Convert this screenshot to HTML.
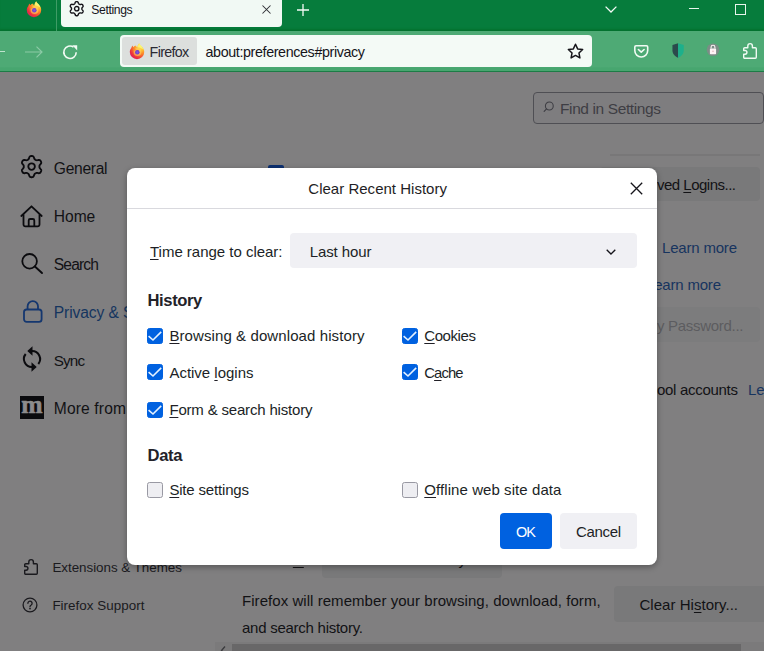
<!DOCTYPE html>
<html lang="en">
<head>
<meta charset="utf-8">
<title>Settings</title>
<style>
html,body{margin:0;padding:0;}
body{width:764px;height:651px;overflow:hidden;position:relative;background:#807f80;font-family:"Liberation Sans",sans-serif;color:#0b0b0e;}
.abs{position:absolute;white-space:nowrap;}
.tx{line-height:20px;}
svg{position:absolute;overflow:visible;}
#titlebar{left:0;top:0;width:764px;height:31px;background:#067c3c;box-shadow:inset 0 -3px 2px -1px #04722f;}
#toolbar{left:0;top:31px;width:764px;height:39.5px;background:linear-gradient(#4eaa75 0,#4eaa75 35.5px,#47a66f 37px,#47a66f 100%);border-bottom:1.5px solid #1c7c46;}
#tab{left:61px;top:0;width:221px;height:26.5px;background:#f1f9f4;border-radius:0 0 4px 4px;}
#tabsep{left:56px;top:0;width:1px;height:31px;background:#3f9c66;}
#urlbar{left:119.5px;top:35px;width:472.5px;height:32px;background:#f4faf6;border-radius:4px;}
#idbox{left:121.5px;top:37px;width:75px;height:28px;background:#dcdfdd;border-radius:3px;}
.dbtn{background:#79797a;border-radius:4px;}
#dialog{left:127px;top:168px;width:530px;height:397px;background:#fff;border-radius:8px;box-shadow:0 2px 6px rgba(0,0,0,.33);}
.cb{width:14px;height:14px;border-radius:2.5px;}
.cb.on{background:#0061e0;border:1px solid #0061e0;}
.cb.off{background:#eeeef2;border:1px solid #9999a3;}
u{text-decoration-thickness:1px;text-underline-offset:2px;}
</style>
</head>
<body>
<!-- browser chrome -->
<div id="titlebar" class="abs"></div>
<div id="tabsep" class="abs"></div>
<div id="tab" class="abs"></div>
<div id="toolbar" class="abs"></div>
<div id="urlbar" class="abs"></div>
<div id="idbox" class="abs"></div>

<svg width="0" height="0" style="left:0;top:0;">
 <defs>
  <radialGradient id="ffg" cx="0.780" cy="0.160" r="0.980">
   <stop offset="0" stop-color="#fff26a"/>
   <stop offset="0.280" stop-color="#ffc330"/>
   <stop offset="0.560" stop-color="#fb7a2a"/>
   <stop offset="0.840" stop-color="#ea2c40"/>
   <stop offset="1" stop-color="#de2068"/>
  </radialGradient>
  <radialGradient id="ffp" cx="0.5" cy="0.5" r="0.5">
   <stop offset="0" stop-color="#8658e0"/>
   <stop offset="1" stop-color="#6a3cc4"/>
  </radialGradient>
  <g id="fflogo">
   <path d="M2.200 5.200C2.400 4.000 3.000 3.000 3.600 2.400C3.700 3.200 4.000 3.800 4.400 4.200C5.200 3.200 6.400 2.700 7.300 2.900C7.300 3.700 7.700 4.300 8.300 4.600C8.400 2.700 9.300 1.000 10.300 .200C10.600 1.600 11.800 2.500 12.900 3.600C14.300 5.000 15.200 6.900 15.200 9.000A7.200 7.200 0 0 1 .800 9.000C.800 7.600 1.300 6.300 2.200 5.200Z" fill="url(#ffg)"/>
   <path d="M8.600 4.400C8.700 2.800 9.400 1.300 10.300 .500C10.700 1.900 12.000 2.800 12.900 3.900C13.600 4.700 14.100 5.600 14.400 6.600C12.800 4.800 10.600 4.300 8.600 4.400Z" fill="#f6f97a" opacity="0.800"/>
   <circle cx="8.500" cy="9.000" r="3.900" fill="#ffd76a" opacity="0.550"/>
   <circle cx="8.300" cy="9.300" r="2.250" fill="url(#ffp)"/>
   <path d="M3.800 6.600c1.300-1.000 2.900-.8 3.900.0c-1.200.0-2.000.7-2.300 1.500z" fill="#ff8a2a"/>
  </g>
  <g id="gear"><path d="M12.0 1.0L12.5 1.0L13.0 1.1L13.4 1.3L13.8 1.6L14.2 2.1L14.5 2.8L14.7 3.5L14.9 4.0L15.2 4.4L15.4 4.6L15.7 4.8L16.0 5.0L16.4 5.2L16.7 5.3L17.0 5.4L17.5 5.5L18.0 5.4L18.8 5.2L19.5 5.1L20.1 5.2L20.6 5.4L21.0 5.7L21.3 6.1L21.5 6.5L21.7 6.9L21.9 7.4L22.0 7.9L22.0 8.4L21.7 8.9L21.2 9.5L20.7 10.1L20.4 10.5L20.2 10.9L20.1 11.3L20.1 11.6L20.1 12.0L20.1 12.4L20.1 12.7L20.2 13.1L20.4 13.5L20.7 13.9L21.2 14.5L21.7 15.1L22.0 15.6L22.0 16.1L21.9 16.6L21.7 17.1L21.5 17.5L21.3 17.9L21.0 18.3L20.6 18.6L20.1 18.8L19.5 18.9L18.8 18.8L18.0 18.6L17.5 18.5L17.0 18.6L16.7 18.7L16.4 18.8L16.1 19.0L15.7 19.2L15.4 19.4L15.2 19.6L14.9 20.0L14.7 20.5L14.5 21.2L14.2 21.9L13.8 22.4L13.4 22.7L13.0 22.9L12.5 23.0L12.0 23.0L11.5 23.0L11.0 22.9L10.6 22.7L10.2 22.4L9.8 21.9L9.5 21.2L9.3 20.5L9.1 20.0L8.8 19.6L8.6 19.4L8.3 19.2L7.9 19.0L7.6 18.8L7.3 18.7L7.0 18.6L6.5 18.5L6.0 18.6L5.2 18.8L4.5 18.9L3.9 18.8L3.4 18.6L3.0 18.3L2.7 17.9L2.5 17.5L2.3 17.1L2.1 16.6L2.0 16.1L2.0 15.6L2.3 15.1L2.8 14.5L3.3 13.9L3.6 13.5L3.8 13.1L3.9 12.7L3.9 12.4L3.9 12.0L3.9 11.6L3.9 11.3L3.8 10.9L3.6 10.5L3.3 10.1L2.8 9.5L2.3 8.9L2.0 8.4L2.0 7.9L2.1 7.4L2.3 6.9L2.5 6.5L2.7 6.1L3.0 5.7L3.4 5.4L3.9 5.2L4.5 5.1L5.2 5.2L6.0 5.4L6.5 5.5L7.0 5.4L7.3 5.3L7.6 5.2L8.0 5.0L8.3 4.8L8.6 4.6L8.8 4.4L9.1 4.0L9.3 3.5L9.5 2.8L9.8 2.1L10.2 1.6L10.6 1.3L11.0 1.1L11.5 1.0Z" fill="none" stroke-linejoin="round"/><circle cx="12" cy="12" r="3.4" fill="none"/></g>
  <g id="puzzle">
   <path d="M1.700 4.700H4.800V2.900a2.300 2.300 0 0 1 4.600 0V4.700H12.300a1 1 0 0 1 1 1V14.300a1 1 0 0 1-1 1H1.700a1 1 0 0 1-1-1V11.200H2.100a1.850 1.850 0 0 0 0-3.700H.700V5.700a1 1 0 0 1 1-1z" fill="none" stroke-width="1.400" stroke-linejoin="round"/>
  </g>
 </defs>
</svg>

<!-- title bar firefox logo -->
<svg style="left:26px;top:0.500px;" width="16" height="16" viewBox="0 0 16 16"><use href="#fflogo"/></svg>
<!-- tab gear -->
<svg style="left:69.3px;top:1.3px;" width="15.4" height="15.4" viewBox="0 0 24 24"><use href="#gear" stroke="#15141a" stroke-width="2.2"/></svg>
<!-- tab close -->
<svg style="left:261.500px;top:4.700px;" width="9" height="9" viewBox="0 0 9 9"><path d="M0.500 0.500L8.500 8.500M8.500 0.500L0.500 8.500" stroke="#2a2a30" stroke-width="1.050" fill="none"/></svg>
<!-- new tab plus -->
<svg style="left:297px;top:3.500px;" width="12" height="12" viewBox="0 0 12 12"><path d="M6 0V12M0 6H12" stroke="#f4fbf6" stroke-width="1.300" fill="none"/></svg>
<!-- list all tabs chevron -->
<svg style="left:605px;top:5.500px;" width="12" height="7" viewBox="0 0 12 7"><path d="M0.600 0.600L6 6L11.400 0.600" stroke="#f4fbf6" stroke-width="1.300" fill="none"/></svg>
<!-- minimize -->
<div class="abs" style="left:689px;top:8.300px;width:10px;height:1px;background:#e8f5ec;"></div>
<!-- maximize -->
<div class="abs" style="left:735px;top:4px;width:8.500px;height:8.500px;border:1px solid #e8f5ec;"></div>

<!-- nav buttons -->
<div class="abs" style="left:0;top:50.700px;width:5px;height:1.300px;background:#bfe3cd;"></div>
<svg style="left:25px;top:45.500px;" width="18" height="12" viewBox="0 0 18 12"><path d="M0 6H17M11.500 0.600L17 6L11.500 11.400" stroke="#8ccaa6" stroke-width="1.200" fill="none"/></svg>
<svg style="left:62px;top:43.500px;" width="16" height="16" viewBox="0 0 16 16"><path d="M14.200 8.200a6.200 6.200 0 1 1-2.700-5.100" stroke="#f0faf3" stroke-width="1.600" fill="none"/><path d="M10.300 1.300H15.200V6.400Z" fill="#f0faf3"/></svg>

<!-- urlbar contents -->
<svg style="left:128.600px;top:42.800px;" width="16" height="16" viewBox="0 0 16 16"><use href="#fflogo"/></svg>
<svg style="left:567px;top:43px;" width="17" height="17" viewBox="0 0 17 17"><path d="M8.500 1.300l2.150 4.600 5.000.600-3.700 3.450.95 4.950-4.400-2.450-4.400 2.450.95-4.950-3.700-3.450 5.000-.600z" fill="none" stroke="#15141a" stroke-width="1.500" stroke-linejoin="round"/></svg>

<!-- toolbar right icons -->
<svg style="left:633.800px;top:45px;" width="14.500" height="12.800" viewBox="0 0 14.500 12.800"><path d="M2 .800h10.500a1.200 1.200 0 0 1 1.200 1.200v3.600a6.450 6.450 0 0 1-12.900 0v-3.600a1.200 1.200 0 0 1 1.200-1.200z" fill="none" stroke="#f0faf3" stroke-width="1.600"/><path d="M4.400 4.500l2.850 2.700 2.850-2.700" fill="none" stroke="#f0faf3" stroke-width="1.600" stroke-linecap="round" stroke-linejoin="round"/></svg>
<svg style="left:672px;top:43.300px;" width="12.200" height="15" viewBox="0 0 11 15" preserveAspectRatio="none"><path d="M5.500 0.300L0.400 2v5.500c0 3.300 2.200 5.900 5.100 7.200z" fill="#2b4a4c"/><path d="M5.500 0.300L10.600 2v5.500c0 3.300-2.200 5.900-5.100 7.200z" fill="#1db08b"/></svg>
<svg style="left:706px;top:43px;" width="14" height="14" viewBox="0 0 14 14"><circle cx="7" cy="6.700" r="6.300" fill="#84888a" opacity="0.850"/><rect x="3.900" y="5.400" width="6.200" height="5.800" rx="0.700" fill="#fdf3f5"/><path d="M5.100 5.600v-1.500a1.900 1.900 0 0 1 3.800 0v1.500" fill="none" stroke="#fdf3f5" stroke-width="1.100"/><circle cx="7" cy="8.300" r="0.700" fill="#d9a5b0"/></svg>
<svg style="left:742.600px;top:43px;" width="14" height="16" viewBox="0 0 14 16"><use href="#puzzle" stroke="#f0faf3"/></svg>

<!-- sidebar icons -->
<svg style="left:20.2px;top:155.2px;" width="23.2" height="23.2" viewBox="0 0 24 24"><use href="#gear" stroke="#0b0b0e" stroke-width="1.9"/></svg>
<svg style="left:20.300px;top:204.500px;" width="23" height="23" viewBox="0 0 23 23"><path d="M1.300 11L11.500 1.300L21.700 11" fill="none" stroke="#0b0b0e" stroke-width="1.800" stroke-linecap="round" stroke-linejoin="round"/><path d="M3.500 9.500V19.500a1.800 1.800 0 0 0 1.800 1.800H17.700a1.800 1.800 0 0 0 1.800-1.800V9.500" fill="none" stroke="#0b0b0e" stroke-width="1.800"/><path d="M8.700 21V15.500a1.500 1.500 0 0 1 1.500-1.500h2.600a1.500 1.500 0 0 1 1.500 1.500V21" fill="none" stroke="#0b0b0e" stroke-width="1.800"/></svg>
<svg style="left:21px;top:253px;" width="22" height="21" viewBox="0 0 22 21"><circle cx="8.600" cy="8.300" r="7.300" fill="none" stroke="#0b0b0e" stroke-width="1.800"/><path d="M13.900 13.500L21 20" stroke="#0b0b0e" stroke-width="1.900" stroke-linecap="round"/></svg>
<svg style="left:22.800px;top:299.800px;" width="20" height="23" viewBox="0 0 20 23"><rect x="1" y="9.500" width="17.600" height="12.300" rx="2.600" fill="none" stroke="#14376f" stroke-width="1.800"/><path d="M4.600 9.500V6.300a5.200 5.200 0 0 1 10.400 0V9.500" fill="none" stroke="#14376f" stroke-width="1.800"/></svg>
<svg style="left:20px;top:345px;" width="24" height="28" viewBox="20 345 24 28"><path d="M38.300 364.000A8 8 0 0 0 32 351" fill="none" stroke="#0b0b0e" stroke-width="2"/><path d="M25.700 354.000A8 8 0 0 0 32 367" fill="none" stroke="#0b0b0e" stroke-width="2"/><path d="M32.500 346.300V355.700L27.300 351z" fill="#0b0b0e"/><path d="M31.500 362.300V371.700L36.700 367z" fill="#0b0b0e"/></svg>
<div class="abs" style="left:20px;top:396px;width:24px;height:22.800px;background:#0b0b0e;"></div>
<div class="abs" style="left:20px;top:391.800px;width:24px;text-align:center;font-family:'Liberation Serif',serif;font-weight:bold;font-size:25.600px;line-height:26.500px;color:#8c8c8c;-webkit-text-stroke:0.6px #8c8c8c;">m</div>
<svg style="left:23.500px;top:559px;" width="14" height="16" viewBox="0 0 14 16"><use href="#puzzle" stroke="#1a1a1e"/></svg>
<svg style="left:22px;top:597px;" width="16" height="16" viewBox="0 0 16 16"><circle cx="8" cy="8" r="6.900" fill="none" stroke="#1a1a1e" stroke-width="1.300"/><path d="M5.900 6.300a2.100 2.100 0 1 1 3.300 1.700c-.8.500-1.200.900-1.200 1.700" fill="none" stroke="#1a1a1e" stroke-width="1.300" stroke-linecap="round"/><circle cx="8" cy="11.600" r="0.900" fill="#1a1a1e"/></svg>

<!-- search box -->
<div class="abs" style="left:533px;top:92px;width:228.500px;height:30px;border:1px solid #4f4f54;border-radius:4px;background:#7e7d7f;"></div>
<svg style="left:542px;top:101px;" width="12.500" height="12.500" viewBox="0 0 14 14"><circle cx="8.200" cy="5.600" r="4.400" fill="none" stroke="#3e3e44" stroke-width="1.200"/><path d="M5.100 8.800L2.400 11.700" stroke="#3e3e44" stroke-width="1.300" stroke-linecap="round"/></svg>

<!-- background page pieces -->
<div class="abs" style="left:268px;top:164.700px;width:16px;height:6px;background:#0c3070;border-radius:2px 2px 0 0;"></div>
<div class="abs" style="left:610px;top:153.700px;width:150px;height:2px;background:#787778;"></div>
<div class="abs dbtn" style="left:600px;top:167px;width:160px;height:34px;"></div>
<div class="abs dbtn" style="left:600px;top:307px;width:160px;height:35px;background:#7c7c7d;"></div>
<div class="abs dbtn" style="left:322px;top:541px;width:180px;height:36.500px;"></div>
<div class="abs dbtn" style="left:614.400px;top:586px;width:160px;height:35.500px;"></div>
<div class="abs" style="left:215px;top:642px;width:549px;height:9px;background:#7b7a7b;"></div>
<div class="abs" style="left:231.500px;top:643.500px;width:509.300px;height:8px;background:#686768;"></div>
<svg style="left:219.500px;top:646px;" width="6" height="8" viewBox="0 0 6 8"><path d="M5 0.500L1.500 4.500L5 8" stroke="#3a3a3d" stroke-width="1.300" fill="none"/></svg>
<div id="t_tab" class="abs tx" style="left:91.3px;top:-0.2px;font-size:12.2px;color:#15141a;letter-spacing:-0.378px;">Settings</div>
<div id="t_ff" class="abs tx" style="left:149.6px;top:42.2px;font-size:14.3px;color:#2b2a33;letter-spacing:-0.682px;">Firefox</div>
<div id="t_url" class="abs tx" style="left:205.5px;top:42.2px;font-size:14.3px;color:#15141a;letter-spacing:-0.374px;">about:preferences#privacy</div>
<div id="t_find" class="abs tx" style="left:560.0px;top:98.6px;font-size:15.5px;color:#3e3e44;letter-spacing:-0.390px;">Find in Settings</div>
<div id="t_gen" class="abs tx" style="left:53.8px;top:158.6px;font-size:15.6px;color:#121215;letter-spacing:-0.282px;">General</div>
<div id="t_home" class="abs tx" style="left:53.8px;top:206.6px;font-size:15.6px;color:#121215;letter-spacing:-0.032px;">Home</div>
<div id="t_search" class="abs tx" style="left:53.8px;top:254.6px;font-size:15.6px;color:#121215;letter-spacing:-0.843px;">Search</div>
<div id="t_priv" class="abs tx" style="left:53.8px;top:302.6px;font-size:15.6px;color:#15355f;letter-spacing:-0.090px;">Privacy &amp; Security</div>
<div id="t_sync" class="abs tx" style="left:53.8px;top:350.7px;font-size:15.24px;color:#121215;letter-spacing:-0.890px;">Sync</div>
<div id="t_more" class="abs tx" style="left:53.8px;top:398.6px;font-size:15.6px;color:#121215;letter-spacing:0.143px;">More from Mozilla</div>
<div id="t_ext" class="abs tx" style="left:52.4px;top:558.0px;font-size:13.4px;color:#1a1a1e;letter-spacing:-0.029px;">Extensions &amp; Themes</div>
<div id="t_sup" class="abs tx" style="left:52.4px;top:595.7px;font-size:13.4px;color:#1a1a1e;letter-spacing:0.039px;">Firefox Support</div>
<div id="t_saved" class="abs tx" style="left:657.0px;top:174.8px;font-size:15px;color:#121215;letter-spacing:-0.506px;">ved <u>L</u>ogins...</div>
<div id="t_lm1" class="abs tx" style="left:662.0px;top:237.8px;font-size:15px;color:#17345f;letter-spacing:-0.190px;">Learn more</div>
<div id="t_lm2" class="abs tx" style="left:646.0px;top:274.8px;font-size:15px;color:#17345f;letter-spacing:-0.190px;">Learn more</div>
<div id="t_pw" class="abs tx" style="left:657.0px;top:315.8px;font-size:15px;color:#5c5c60;letter-spacing:-0.295px;">y Password...</div>
<div id="t_acc" class="abs tx" style="left:657.0px;top:379.8px;font-size:15px;color:#121215;letter-spacing:-0.294px;">ool accounts</div>
<div id="t_lm3" class="abs tx" style="left:748.0px;top:379.8px;font-size:15px;color:#17345f;letter-spacing:-0.190px;">Learn more</div>
<div id="t_fw" class="abs tx" style="left:242.0px;top:549.8px;font-size:15px;color:#121215;letter-spacing:0.105px;">Firefox <u>w</u>ill</div>
<div id="t_rem" class="abs tx" style="left:340.0px;top:549.8px;font-size:15px;color:#121215;letter-spacing:0.231px;">Remember history</div>
<div id="t_desc1" class="abs tx" style="left:242.0px;top:590.9px;font-size:15px;color:#121215;letter-spacing:0.052px;">Firefox will remember your browsing, download, form,</div>
<div id="t_desc2" class="abs tx" style="left:242.0px;top:618.0px;font-size:15px;color:#121215;letter-spacing:-0.257px;">and search history.</div>
<div id="t_clr" class="abs tx" style="left:639.5px;top:594.8px;font-size:15px;color:#121215;letter-spacing:0.027px;">Clear Hi<u>s</u>tory...</div>

<!-- dialog -->
<div id="dialog" class="abs"></div>
<div class="abs" style="left:127px;top:208px;width:530px;height:1px;background:#d9d9de;"></div>
<svg style="left:629.500px;top:182px;" width="13" height="13" viewBox="0 0 13 13"><path d="M0.800 0.800L12.200 12.200M12.200 0.800L0.800 12.200" stroke="#15141a" stroke-width="1.300" fill="none"/></svg>
<div class="abs" style="left:289.500px;top:233.300px;width:347.500px;height:35px;background:#f0f0f4;border-radius:4px;"></div>
<svg style="left:606px;top:248.500px;" width="10" height="6" viewBox="0 0 10 6"><path d="M0.700 0.700L5 5L9.300 0.700" stroke="#15141a" stroke-width="1.300" fill="none"/></svg>

<div class="abs cb on" style="left:147px;top:327.500px;"></div>
<div class="abs cb on" style="left:147px;top:364px;"></div>
<div class="abs cb on" style="left:147px;top:401.500px;"></div>
<div class="abs cb on" style="left:401.700px;top:327.500px;"></div>
<div class="abs cb on" style="left:401.700px;top:364px;"></div>
<div class="abs cb off" style="left:147px;top:482px;"></div>
<div class="abs cb off" style="left:401.700px;top:482px;"></div>
<!-- check marks -->
<svg style="left:147px;top:327.500px;" width="16" height="16" viewBox="0 0 16 16"><path d="M1.600 8.100L6.000 12.000L14.200 3.900" stroke="#e4f1ff" stroke-width="1.600" fill="none"/></svg>
<svg style="left:147px;top:364px;" width="16" height="16" viewBox="0 0 16 16"><path d="M1.600 8.100L6.000 12.000L14.200 3.900" stroke="#e4f1ff" stroke-width="1.600" fill="none"/></svg>
<svg style="left:147px;top:401.500px;" width="16" height="16" viewBox="0 0 16 16"><path d="M1.600 8.100L6.000 12.000L14.200 3.900" stroke="#e4f1ff" stroke-width="1.600" fill="none"/></svg>
<svg style="left:401.700px;top:327.500px;" width="16" height="16" viewBox="0 0 16 16"><path d="M1.600 8.100L6.000 12.000L14.200 3.900" stroke="#e4f1ff" stroke-width="1.600" fill="none"/></svg>
<svg style="left:401.700px;top:364px;" width="16" height="16" viewBox="0 0 16 16"><path d="M1.600 8.100L6.000 12.000L14.200 3.900" stroke="#e4f1ff" stroke-width="1.600" fill="none"/></svg>

<div class="abs" style="left:500px;top:513px;width:52px;height:35.500px;background:#0061e0;border-radius:4px;"></div>
<div class="abs" style="left:560.300px;top:513px;width:76.500px;height:35.500px;background:#f0f0f4;border-radius:4px;"></div>
<div id="d_title" class="abs tx" style="left:308.3px;top:178.8px;font-size:15px;color:#1f1e25;letter-spacing:0.017px;">Clear Recent History</div>
<div id="d_time" class="abs tx" style="left:150.0px;top:241.8px;font-size:15px;color:#201f26;letter-spacing:-0.018px;"><u>T</u>ime range to clear:</div>
<div id="d_last" class="abs tx" style="left:309.7px;top:241.8px;font-size:15px;color:#201f26;letter-spacing:-0.094px;">Last hour</div>
<div id="d_hist" class="abs tx" style="left:147.5px;top:291.1px;font-size:16.6px;color:#232229;letter-spacing:-0.395px;font-weight:bold;">History</div>
<div id="d_brow" class="abs tx" style="left:169.4px;top:325.9px;font-size:15px;color:#201f26;letter-spacing:0.096px;"><u>B</u>rowsing &amp; download history</div>
<div id="d_act" class="abs tx" style="left:169.4px;top:362.8px;font-size:15px;color:#201f26;letter-spacing:-0.010px;">Active <u>l</u>ogins</div>
<div id="d_form" class="abs tx" style="left:169.4px;top:400.0px;font-size:15px;color:#201f26;letter-spacing:-0.181px;"><u>F</u>orm &amp; search history</div>
<div id="d_cook" class="abs tx" style="left:424.3px;top:325.9px;font-size:15px;color:#201f26;letter-spacing:-0.434px;"><u>C</u>ookies</div>
<div id="d_cache" class="abs tx" style="left:424.3px;top:362.9px;font-size:14.8px;color:#201f26;letter-spacing:-0.900px;">C<u>a</u>che</div>
<div id="d_data" class="abs tx" style="left:147.5px;top:446.0px;font-size:16.6px;color:#232229;letter-spacing:-0.327px;font-weight:bold;">Data</div>
<div id="d_site" class="abs tx" style="left:169.4px;top:480.2px;font-size:15px;color:#201f26;letter-spacing:-0.177px;"><u>S</u>ite settings</div>
<div id="d_off" class="abs tx" style="left:424.3px;top:480.2px;font-size:15px;color:#201f26;letter-spacing:0.072px;"><u>O</u>ffline web site data</div>
<div id="d_ok" class="abs tx" style="left:516.0px;top:522.1px;font-size:14.46px;color:#ffffff;letter-spacing:-0.893px;">OK</div>
<div id="d_cancel" class="abs tx" style="left:576.0px;top:521.9px;font-size:15px;color:#201f26;letter-spacing:-0.340px;">Cancel</div>

</body>
</html>
